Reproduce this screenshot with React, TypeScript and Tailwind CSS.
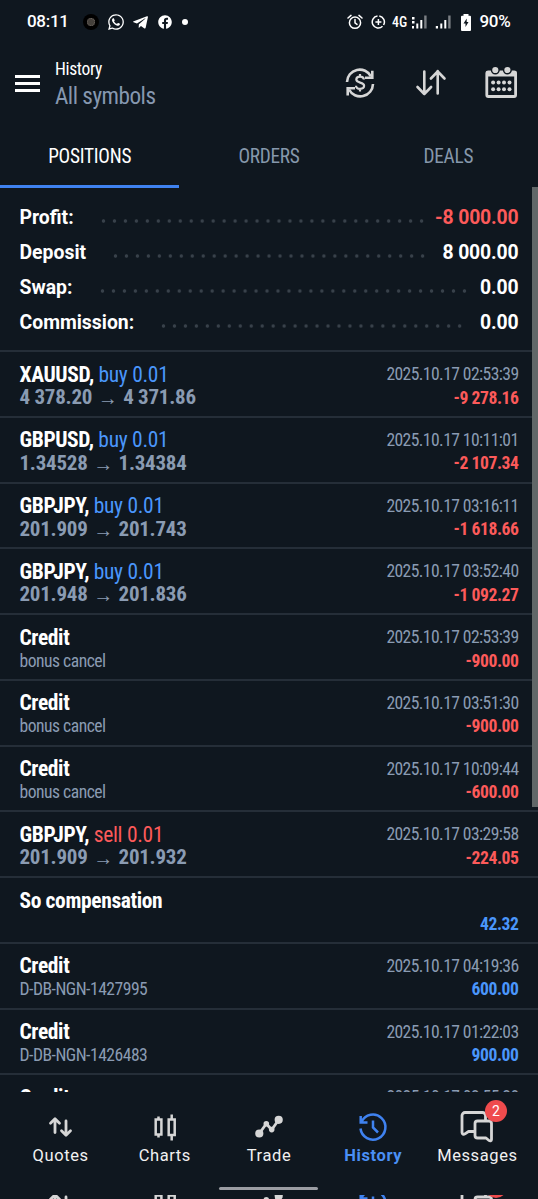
import type { ReactNode } from 'react';
import { FaFacebook, FaTelegramPlane, FaWhatsapp } from 'react-icons/fa';

interface HistoryEntry {
    title: string;
    side?: 'buy' | 'sell';
    volume?: string;
    from?: string;
    to?: string;
    note?: string;
    time?: string;
    amount?: string;
}

const entries: HistoryEntry[] = [
    { title: 'XAUUSD,', side: 'buy', volume: '0.01', from: '4 378.20', to: '4 371.86', time: '2025.10.17 02:53:39', amount: '-9 278.16' },
    { title: 'GBPUSD,', side: 'buy', volume: '0.01', from: '1.34528', to: '1.34384', time: '2025.10.17 10:11:01', amount: '-2 107.34' },
    { title: 'GBPJPY,', side: 'buy', volume: '0.01', from: '201.909', to: '201.743', time: '2025.10.17 03:16:11', amount: '-1 618.66' },
    { title: 'GBPJPY,', side: 'buy', volume: '0.01', from: '201.948', to: '201.836', time: '2025.10.17 03:52:40', amount: '-1 092.27' },
    { title: 'Credit', note: 'bonus cancel', time: '2025.10.17 02:53:39', amount: '-900.00' },
    { title: 'Credit', note: 'bonus cancel', time: '2025.10.17 03:51:30', amount: '-900.00' },
    { title: 'Credit', note: 'bonus cancel', time: '2025.10.17 10:09:44', amount: '-600.00' },
    { title: 'GBPJPY,', side: 'sell', volume: '0.01', from: '201.909', to: '201.932', time: '2025.10.17 03:29:58', amount: '-224.05' },
    { title: 'So compensation', amount: '42.32' },
    { title: 'Credit', note: 'D-DB-NGN-1427995', time: '2025.10.17 04:19:36', amount: '600.00' },
    { title: 'Credit', note: 'D-DB-NGN-1426483', time: '2025.10.17 01:22:03', amount: '900.00' },
    { title: 'Credit', time: '2025.10.17 03:55:28' },
];

const condensed = "font-['Roboto_Condensed','Roboto',sans-serif] font-stretch-condensed";

function StatusBar() {
    return (
        <div className="flex h-11 shrink-0 items-center pl-[27px] text-white">
            <span className="w-[56px] text-[17px] font-medium tracking-[-0.3px]">08:11</span>
            <span className="flex size-4 items-center justify-center rounded-full bg-black">
                <span className="size-2 rounded-full border border-dotted border-stone-500 bg-stone-700" />
            </span>
            <FaWhatsapp size={18} className="ml-[8px]" />
            <FaTelegramPlane size={17} className="ml-[7px]" />
            <FaFacebook size={14} className="ml-[9px]" />
            <span className="ml-[10px] size-[6px] rounded-full bg-white" />
            <svg className="ml-[159px]" width="16" height="16" viewBox="0 0 16 16" fill="none" stroke="currentColor" strokeWidth="1.5" strokeLinecap="round">
                <circle cx="8" cy="8.7" r="5.6" />
                <path d="M8 5.5v3.4l2 1.5M1 4l3-2.6M15 4l-3-2.6" />
            </svg>
            <svg className="ml-2" width="15" height="16" viewBox="0 0 15 16" fill="none" stroke="currentColor" strokeWidth="1.5">
                <path d="M8.3 2.1A6 6 0 0 1 12.6 11M11.5 12.3A6 6 0 1 1 6.5 2.1M7.4 5v6M4.4 8h6" />
            </svg>
            <span className="ml-[6px] w-[18.5px] text-[14px] font-medium font-stretch-condensed">4G</span>
            <svg width="17" height="16" viewBox="0 0 17 16" fill="currentColor">
                <path d="M1 3h2.5v2.5H1zM1 7h2.5v2.5H1zM1 12h2v2.5H1zM5.300 9.500h2v5h-2zM9.300 6h2v8.500h-2z" />
                <path d="M13.200 1.5h2.4v13h-2.4z" opacity=".45" />
            </svg>
            <svg className="ml-[7px]" width="17" height="16" viewBox="0 0 17 16" fill="currentColor">
                <path d="M.8 12h2.2v2.5H.8zM5.300 9.500h2v5h-2zM9.300 6h2v8.500h-2z" />
                <path d="M13.200 1.5h2.4v13h-2.4z" opacity=".45" />
            </svg>
            <svg className="ml-[8px]" width="12" height="17" viewBox="0 0 12 17">
                <path fill="currentColor" d="M3.500 0h5v1.800H10a1 1 0 0 1 1 1V16a1 1 0 0 1-1 1H2a1 1 0 0 1-1-1V2.800a1 1 0 0 1 1-1h1.500z" />
                <path fill="#0f171f" d="M6.700 4.500 3.500 9.500h2v3.500L8.500 8H6.700z" />
            </svg>
            <span className="ml-[8px] text-[17px] font-medium tracking-[-0.3px]">90%</span>
        </div>
    );
}

function Header() {
    return (
        <header className="flex h-20 shrink-0 items-center pb-[2px] pl-[15px]">
            <div className="flex w-[25px] flex-col gap-1">
                <span className="h-[3px] bg-white" />
                <span className="h-[3px] bg-white" />
                <span className="h-[3px] bg-white" />
            </div>
            <div className={`ml-[15px] w-[289px] pt-[1px] ${condensed}`}>
                <h1 className="text-[17.5px] leading-6 tracking-[-0.35px] text-white">History</h1>
                <p className="text-[23.2px] leading-[30px] tracking-[-0.5px] text-[#8698b0]">All symbols</p>
            </div>
            <svg width="32" height="32" viewBox="0 0 32 32" fill="none" stroke="#d6d6d6" strokeWidth="2.6">
                <path d="M3 15A12.700 12.700 0 0 1 27 9.500M29 17A12.700 12.700 0 0 1 5 22.500" />
                <path d="M28.300 3.700V10.800H21M3.700 28.500V21.200H11" />
                <path d="M19.900 12.500c-.2-1.900-1.700-2.800-3.800-2.800s-3.800 1-3.800 2.900c0 4 7.800 2.100 7.800 6.200 0 2.100-1.800 3-4 3-2.200 0-4-1.100-4.100-3.100M16 7v3M16 21.500v3" strokeWidth="2.200" />
            </svg>
            <svg className="ml-[39px]" width="32" height="32" viewBox="0 0 32 32" fill="none" stroke="#d6d6d6" strokeWidth="2.600" strokeLinecap="round" strokeLinejoin="round">
                <path d="M9.300 4.500v22.500M2.500 20l6.800 7 6.800-7M22.700 26.500V4M15.900 11.500l6.800-7 6.800 7" />
            </svg>
            <svg className="ml-[38px]" width="34" height="34" viewBox="0 0 34 34" fill="#d6d6d6">
                <rect x="1.800" y="6" width="28.800" height="24.500" rx="1.500" fill="none" stroke="#d6d6d6" strokeWidth="2.800" />
                <path d="M1 5.500h30.500v5H1z" />
                <circle cx="10.300" cy="4" r="3.800" stroke="#0f171f" strokeWidth="1.400" />
                <circle cx="22.400" cy="4" r="3.800" stroke="#0f171f" strokeWidth="1.400" />
                {[8.1, 13.6, 19, 24.5].map((x) => (
                    <g key={x}>
                        <circle cx={x} cy="16.500" r="2" />
                        <circle cx={x} cy="23.300" r="2" />
                    </g>
                ))}
            </svg>
        </header>
    );
}

function Tabs() {
    return (
        <div className={`grid h-[63.5px] shrink-0 grid-cols-3 text-center text-[19.3px] leading-[57px] tracking-[-0.25px] text-[#8698ab] ${condensed}`}>
            <div className="border-b-3 border-[#3f82f0] pt-[3.5px] text-white">POSITIONS</div>
            <div className="pt-[3.5px]">ORDERS</div>
            <div className="pt-[3.5px]">DEALS</div>
        </div>
    );
}

function SummaryRow({ label, value, dots, valueClass = 'text-white' }: { label: string; value: string; dots: string; valueClass?: string }) {
    return (
        <div className="flex h-[35px] items-center text-[19.4px] font-bold">
            <span className="text-white">{label}</span>
            <div className="flex flex-1 justify-end">
                <span className={`mt-[5px] h-2 bg-[radial-gradient(circle,#38414a_1.3px,transparent_2.1px)] bg-[length:10.97px_8px] ${dots}`} />
            </div>
            <span className={`tracking-[-0.15px] ${valueClass}`}>{value}</span>
        </div>
    );
}

function EntryRow({ entry }: { entry: HistoryEntry }) {
    const negative = entry.amount?.startsWith('-');
    return (
        <div className="flex h-[65.77px] justify-between border-t-2 border-[#252e38] px-[19.5px]">
            <div>
                <p className="mt-[10.5px] text-[21.5px] leading-[23px] font-bold tracking-[-0.38px] text-white">
                    {entry.title}
                    {entry.side && (
                        <span className={`font-normal tracking-[-0.3px] ${entry.side === 'buy' ? 'text-[#4a96fb]' : 'text-[#fc5a5a]'}`}> {entry.side} {entry.volume}</span>
                    )}
                </p>
                {entry.from && (
                    <p className="flex pt-[0.5px] text-[21px] leading-[23px] font-bold tracking-[-0.25px] text-[#8a9bb2]">
                        <span>{entry.from}</span>
                        <span className="w-[31px] pt-[1px] text-center text-[20px] font-normal">→</span>
                        <span>{entry.to}</span>
                    </p>
                )}
                {entry.note && <p className="text-[17.6px] leading-6 tracking-[-0.5px] text-[#8a9bb2]">{entry.note}</p>}
            </div>
            <div className="pt-[10px] text-right">
                <p className="h-6 text-[17.6px] leading-6 tracking-[-0.58px] text-[#8a9bb2]">{entry.time}</p>
                <p className="pt-[0.5px]">
                    <span className={`block text-[17.6px] leading-[23px] font-bold tracking-[-0.43px] ${negative ? 'text-[#fc5a5a]' : 'text-[#4a96fb]'}`}>{entry.amount}</span>
                </p>
            </div>
        </div>
    );
}

function QuotesIcon() {
    return (
        <svg width="32" height="34" viewBox="0 0 32 34" fill="none" stroke="#d6d6d6" strokeWidth="2.8" strokeLinecap="round" strokeLinejoin="round">
            <path d="M10 23.500V10.500M5.500 14.300l4.500-4.500 4.500 4.500M21 12v13.500M16.500 21.700l4.500 4.500 4.500-4.500" />
        </svg>
    );
}

function ChartsIcon() {
    return (
        <svg width="32" height="34" viewBox="0 0 32 34" fill="none" stroke="#d6d6d6" strokeWidth="2.5">
            <path d="M6.700 10.500h5.700v15H6.700zM19.700 10.500h6v15.500h-6zM9.500 7.500v3M9.500 25.500v3M22.700 5.500v5M22.700 26v5.500" />
        </svg>
    );
}

function TradeIcon() {
    return (
        <svg width="32" height="34" viewBox="0 0 32 34" fill="#d6d6d6" stroke="#d6d6d6" strokeWidth="2.8" strokeLinejoin="round">
            <path d="M6.300 24.500l7-9.700 5.400 6 7-10" fill="none" />
            <circle cx="6.300" cy="24.500" r="2.700" />
            <circle cx="25.700" cy="10.800" r="2.700" />
            <circle cx="13.300" cy="14.800" r="1.400" />
            <circle cx="18.700" cy="20.600" r="1.400" />
        </svg>
    );
}

function HistoryIcon() {
    return (
        <svg width="32" height="34" viewBox="0 0 32 34" fill="none" stroke="#3f82f0" strokeWidth="2.500">
            <path d="M4.500 13A12.500 12.500 0 1 1 3.500 19.500M3.700 7v6.500h6.800M16 11.500v7l5 5" />
        </svg>
    );
}

function MessagesIcon() {
    return (
        <svg width="34" height="34" viewBox="0 0 34 34" fill="none" stroke="#d6d6d6" strokeWidth="2.800" strokeLinejoin="round">
            <path d="M14.500 22.500H8.500L5 24.800c-1.500.9-3 .4-3-1.300V6.500a3 3 0 0 1 3-3h17.500a3 3 0 0 1 3 3v5" />
            <path d="M17.500 12h11.500a2.500 2.500 0 0 1 2.500 2.500v16c0 1.600-1.500 1.800-2.500 1l-3-2.500h-8.500a2.500 2.500 0 0 1-2.500-2.500v-12a2.500 2.500 0 0 1 2.500-2.500z" />
        </svg>
    );
}

function NavItem({ icon, label, active, badge }: { icon: ReactNode; label?: string; active?: boolean; badge?: ReactNode }) {
    return (
        <div className="flex w-[104.2px] flex-col items-center pt-[17.5px]">
            <div className="relative">
                {icon}
                {badge}
            </div>
            {label && (
                <span className={`pt-[2.5px] text-[16.5px] leading-5 tracking-[0.6px] ${active ? 'font-bold text-[#4a8ff5]' : 'text-[#f1f1f1]'}`}>{label}</span>
            )}
        </div>
    );
}

function Badge({ count }: { count?: number }) {
    return (
        <span className="absolute -top-[9px] left-[24.500px] flex size-[22px] items-center justify-center rounded-full bg-[#ef4b4d] text-[14px] text-white">
            {count}
        </span>
    );
}

export default function App() {
    return (
        <div className="relative flex h-[1199px] w-[538px] flex-col overflow-hidden bg-[#0f171f] font-['Roboto',sans-serif]">
            <StatusBar />
            <Header />
            <Tabs />
            <main className="h-[904px] shrink-0 overflow-hidden">
                <section className="h-[162.5px] px-[19.5px] pt-[13px]">
                    <SummaryRow label="Profit:" value="-8 000.00" valueClass="text-[#fc5a5a]" dots="w-[329.1px] mr-[8px]" />
                    <SummaryRow label="Deposit" value="8 000.00" dots="w-[318.13px] mr-[14px]" />
                    <SummaryRow label="Swap:" value="0.00" dots="w-[373px] mr-[10.5px]" />
                    <SummaryRow label="Commission:" value="0.00" dots="w-[307.16px] mr-[15px]" />
                </section>
                <section className={condensed}>
                    {entries.map((entry, i) => (
                        <EntryRow key={i} entry={entry} />
                    ))}
                </section>
            </main>
            <nav className="flex h-[103px] shrink-0 justify-center overflow-hidden">
                <NavItem icon={<QuotesIcon />} label="Quotes" />
                <NavItem icon={<ChartsIcon />} label="Charts" />
                <NavItem icon={<TradeIcon />} label="Trade" />
                <NavItem icon={<HistoryIcon />} label="History" active />
                <NavItem icon={<MessagesIcon />} label="Messages" badge={<Badge count={2} />} />
            </nav>
            {/* icons of the nav behind, peeking in at the bottom edge */}
            <div className="h-[5px] shrink-0 overflow-hidden">
                <div className="-mt-[27px] flex justify-center">
                    <NavItem icon={<QuotesIcon />} />
                    <NavItem icon={<ChartsIcon />} />
                    <NavItem icon={<TradeIcon />} />
                    <NavItem icon={<HistoryIcon />} />
                    <NavItem icon={<MessagesIcon />} badge={<Badge />} />
                </div>
            </div>
            <div className="absolute top-[187px] right-0 h-[620px] w-[6px] bg-[#616768]" />
            <div className="absolute top-[1187px] left-[219px] h-[3px] w-[99px] rounded-full bg-[#9b9da3]" />
        </div>
    );
}
